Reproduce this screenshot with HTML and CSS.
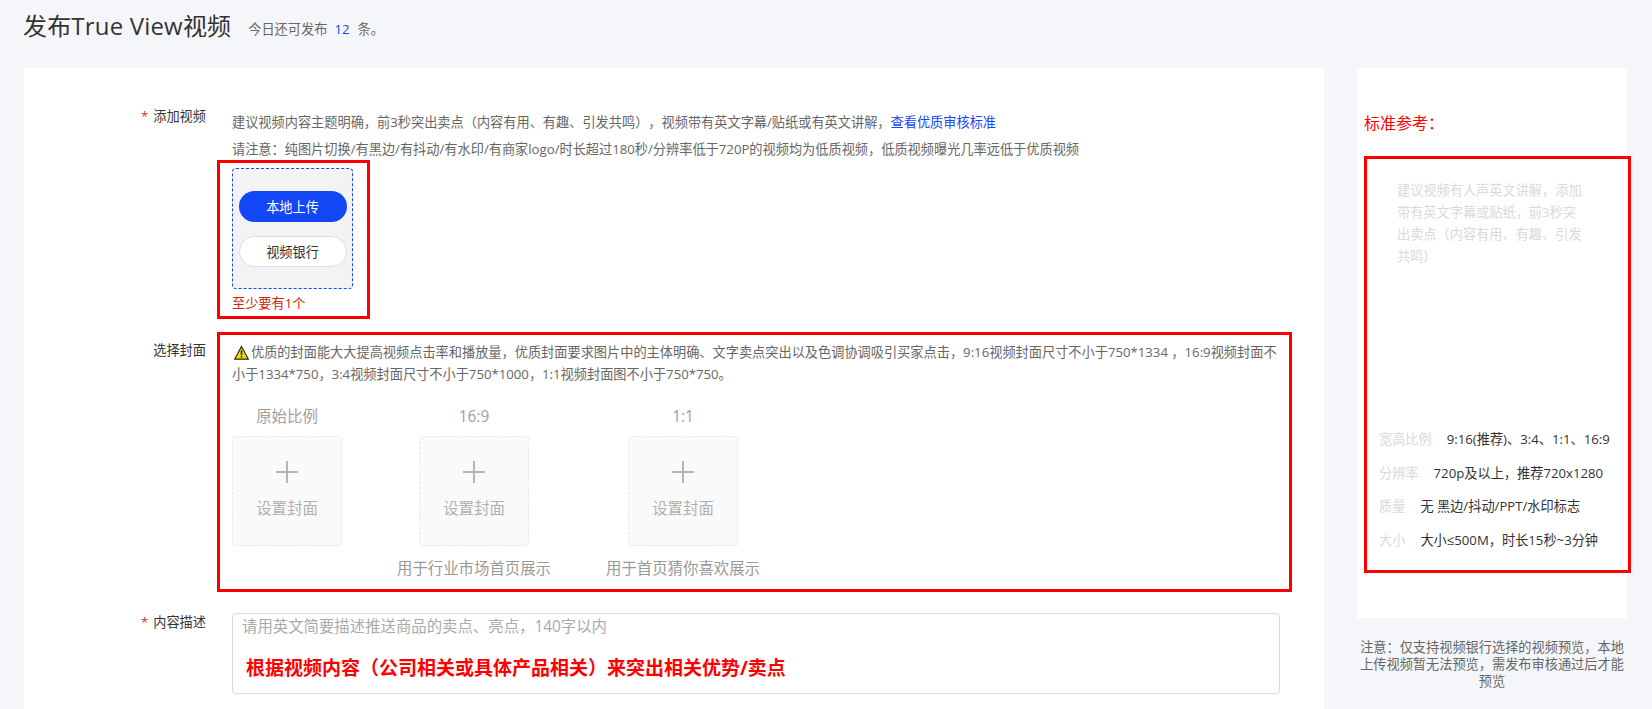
FILE: index.html
```html
<!DOCTYPE html>
<html lang="zh-CN">
<head>
<meta charset="utf-8">
<title>发布True View视频</title>
<link rel="stylesheet" href="styles.css">
</head>
<body>
<div class="page">
  <header class="head">
    <h1 class="title">发布True View视频</h1>
    <p class="quota">今日还可发布<b class="quota-num">12</b>条。</p>
  </header>
  <div class="layout">
    <main class="card">
      <section class="row">
        <div class="label"><span class="star">*</span>添加视频</div>
        <div class="field">
          <div class="hints">
            <p class="hint">建议视频内容主题明确，前3秒突出卖点（内容有用、有趣、引发共鸣），视频带有英文字幕/贴纸或有英文讲解，<a class="link">查看优质审核标准</a></p>
            <p class="hint">请注意：纯图片切换/有黑边/有抖动/有水印/有商家logo/时长超过180秒/分辨率低于720P的视频均为低质视频，低质视频曝光几率远低于优质视频</p>
          </div>
          <div class="mark mark-upload">
            <div class="drop">
              <button class="btn btn-primary">本地上传</button>
              <button class="btn btn-ghost">视频银行</button>
            </div>
            <div class="error">至少要有1个</div>
          </div>
        </div>
      </section>
      <section class="row row-cover">
        <div class="label label-cover">选择封面</div>
        <div class="field">
          <div class="mark mark-cover">
            <p class="notice"><svg class="warn" viewBox="0 0 16 16" width="15" height="15"><path d="M8 1.5 15.2 15H.8Z" fill="#f7dc00" stroke="#222" stroke-width="1.2"/><path d="M8 5.6v5.2M8 11.8v1.6" stroke="#222" stroke-width="1.6"/></svg>优质的封面能大大提高视频点击率和播放量，优质封面要求图片中的主体明确、文字卖点突出以及色调协调吸引买家点击，9:16视频封面尺寸不小于750*1334 ，16:9视频封面不<br>小于1334*750，3:4视频封面尺寸不小于750*1000，1:1视频封面图不小于750*750。</p>
            <div class="covers">
              <div class="cover cover-plain">
                <div class="cover-ratio">原始比例</div>
                <div class="cover-box"><svg class="plus" viewBox="0 0 24 24" width="24" height="24"><path d="M12 1v22M1 12h22" stroke="#b4b4b4" stroke-width="2" fill="none"/></svg><span class="cover-text">设置封面</span></div>
              </div>
              <div class="cover">
                <div class="cover-ratio">16:9</div>
                <div class="cover-box"><svg class="plus" viewBox="0 0 24 24" width="24" height="24"><path d="M12 1v22M1 12h22" stroke="#b4b4b4" stroke-width="2" fill="none"/></svg><span class="cover-text">设置封面</span></div>
                <div class="cover-cap">用于行业市场首页展示</div>
              </div>
              <div class="cover">
                <div class="cover-ratio">1:1</div>
                <div class="cover-box"><svg class="plus" viewBox="0 0 24 24" width="24" height="24"><path d="M12 1v22M1 12h22" stroke="#b4b4b4" stroke-width="2" fill="none"/></svg><span class="cover-text">设置封面</span></div>
                <div class="cover-cap">用于首页猜你喜欢展示</div>
              </div>
            </div>
          </div>
        </div>
      </section>
      <section class="row row-desc">
        <div class="label label-desc"><span class="star">*</span>内容描述</div>
        <div class="field field-desc">
          <div class="textarea">
            <div class="placeholder">请用英文简要描述推送商品的卖点、亮点，140字以内</div>
            <div class="redline">根据视频内容（公司相关或具体产品相关）来突出相关优势/卖点</div>
          </div>
        </div>
      </section>
    </main>
    <aside class="side">
      <div class="panel">
        <h2 class="panel-title">标准参考：</h2>
        <div class="mark mark-side">
          <p class="advice">建议视频有人声英文讲解，添加带有英文字幕或贴纸，前3秒突出卖点（内容有用、有趣、引发共鸣）</p>
          <ul class="specs">
            <li class="spec"><span class="spec-key">宽高比例</span><span>9:16(推荐)、3:4、1:1、16:9</span></li>
            <li class="spec"><span class="spec-key">分辨率</span><span>720p及以上，推荐720x1280</span></li>
            <li class="spec"><span class="spec-key">质量</span><span>无 黑边/抖动/PPT/水印标志</span></li>
            <li class="spec"><span class="spec-key">大小</span><span>大小≤500M，时长15秒~3分钟</span></li>
          </ul>
        </div>
      </div>
      <p class="side-note">注意：仅支持视频银行选择的视频预览，本地上传视频暂无法预览，需发布审核通过后才能预览</p>
    </aside>
  </div>
</div>
</body>
</html>
```
FILE: styles.css
```css
* { box-sizing: border-box; }
html, body { margin: 0; padding: 0; height: 100%; overflow: hidden; }
body {
  background: #f5f6fa;
  color: #333;
  font-family: "Open Sans", "Noto Sans CJK SC", sans-serif;
  font-size: 13.2px;
  text-spacing-trim: space-all;
}
p, h1, h2, ul { margin: 0; padding: 0; font-weight: 400; }

.page { height: 709px; overflow: hidden; }
.head { display: flex; align-items: center; height: 68px; padding: 0 0 16px 23px; }
.title { font-size: 24px; line-height: 32px; color: #333; letter-spacing: 0.18px; }
.quota { margin: 6px 0 0 17px; color: #666; font-size: 13.2px; line-height: 20px; }
.quota-num { margin: 0 8px 0 7px; font-weight: 400; color: #1346f5; }

.layout { display: flex; align-items: flex-start; gap: 33px; padding-left: 24px; }
.card { width: 1300px; height: 641px; padding-top: 37px; background: #fff; flex: none; }

.row { display: flex; }
.row-cover { margin-top: 13px; }
.row-desc { margin-top: 21px; }
.label { width: 182px; margin-right: 11px; text-align: right; line-height: 22px; color: #333; flex: none; }
.label-cover { padding-top: 7px; }
.label-desc { margin-top: -2px; }
.star { margin-right: 5px; color: #d4400f; }
.field { flex: 1; min-width: 0; }
.hints { padding: 6px 0 0 15px; }
.hint { line-height: 22px; color: #666; white-space: nowrap; }
.hint + .hint { margin-top: 5px; }
.link { color: #1346f5; }

.mark { border: 3px solid #f00; }
.mark-upload { width: 153px; height: 159px; padding: 5px 0 0 12px; }
.drop {
  display: flex; flex-direction: column; align-items: center; gap: 14px;
  width: 121px; height: 121px; padding-top: 22px;
  border: 1px dashed #1346f5; border-radius: 4px; background: #f3f3f3;
}
.btn { width: 108px; height: 31px; border-radius: 16px; font: inherit; flex: none; }
.btn-primary { border: 0; background: #1346f5; color: #fff; }
.btn-ghost { border: 1px solid #ddd; background: #fff; color: #333; }
.error { margin-top: 4px; line-height: 20px; color: #c8290a; }

.mark-cover { width: 1075px; height: 260px; padding: 6px 0 0 12px; }
.notice { line-height: 22px; color: #666; white-space: nowrap; }
.warn { display: inline-block; margin: 0 2px 0 2px; vertical-align: -3px; }
.covers { display: flex; gap: 55px; margin-top: 21px; }
.cover { display: flex; flex-direction: column; align-items: center; width: 154px; }
.cover-plain { width: 110px; }
.cover-ratio { height: 22px; margin-bottom: 8px; font-size: 15.4px; line-height: 22px; color: #a0a0a0; }
.cover-box {
  display: flex; flex-direction: column; align-items: center;
  width: 110px; height: 110px; padding-top: 23px;
  border: 1px dashed #e8e8e8; border-radius: 4px; background: #fafafa;
}
.plus { display: block; flex: none; }
.cover-text { margin-top: 14px; font-size: 15.4px; line-height: 22px; color: #b0b0b0; }
.cover-cap { margin-top: 12px; font-size: 15.4px; line-height: 22px; color: #999; white-space: nowrap; }

.field-desc { padding-left: 15px; }
.textarea {
  width: 1048px; height: 81px; padding: 2px 0 0 9px;
  border: 1px solid #d9d9d9; border-radius: 4px; background: #fff;
}
.placeholder { font-size: 15.4px; line-height: 22px; color: #aaa; }
.redline { margin: 17px 0 0 4px; font-size: 19px; font-weight: 700; line-height: 26px; color: #f00; white-space: nowrap; }

.side { width: 270px; flex: none; }
.panel { width: 270px; height: 550px; padding: 43px 0 0 7px; background: #fff; }
.panel-title { font-size: 16px; line-height: 24px; color: #f00; }
.mark-side {
  display: flex; flex-direction: column; justify-content: space-between;
  width: 267px; height: 417px; margin-top: 21px; padding: 20px 0 13px 0;
}
.advice { width: 190px; margin-left: 30px; line-height: 22px; color: #d9d9d9; }
.specs { list-style: none; padding-left: 12px; }
.spec { display: flex; gap: 15px; height: 33.5px; line-height: 33.5px; color: #333; white-space: nowrap; }
.spec-key { color: #d9d9d9; }
.side-note { margin-top: 21px; text-align: center; line-height: 17px; color: #666; }
```
